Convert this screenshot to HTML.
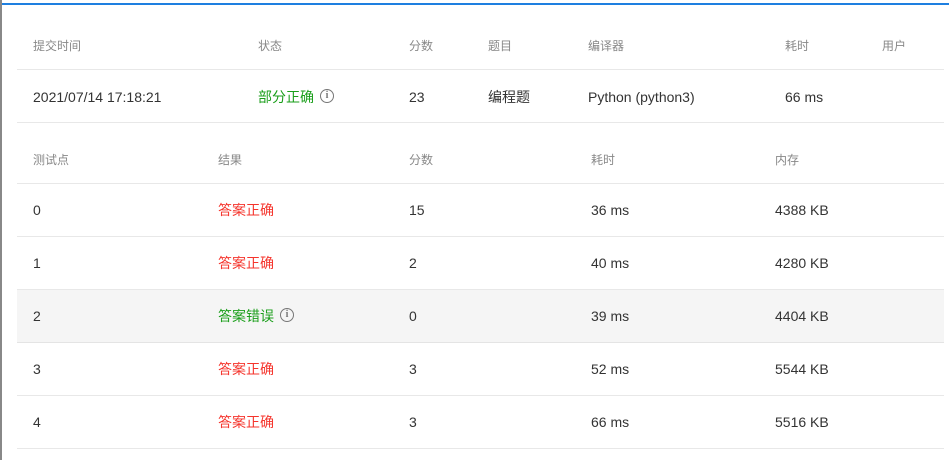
<!DOCTYPE html><html><head><style>
body{margin:0;width:949px;height:460px;overflow:hidden;background:#fff;font-family:"Liberation Sans","Noto Sans CJK SC",sans-serif;font-size:14px;color:#333;position:relative}
.top{position:absolute;left:0;top:3px;width:949px;height:2px;background:#1e7fe0}
.lb{position:absolute;left:0;top:0;width:2px;height:460px;background:#888}
.hl{position:absolute;left:17px;width:927px;height:1px;background:#e8e8e8}
.t{position:absolute;white-space:nowrap;line-height:16px}
.h{color:#888;font-size:12px}
.g{color:#1a9e1a}.r{color:#f5342c}
.i{display:inline-block;box-sizing:border-box;width:14px;height:14px;border:1.5px solid #777;border-radius:50%;color:#777;font-size:10px;line-height:11px;text-align:center;font-weight:bold;vertical-align:middle;position:relative;top:-2px;margin-left:6px;font-family:"Liberation Serif",serif}
.bg{position:absolute;left:17px;top:290px;width:927px;height:52px;background:#f5f5f5}
</style></head><body>
<div class="top"></div><div class="lb"></div>
<div class="bg"></div>
<div class="hl" style="top:69px"></div><div class="hl" style="top:122px"></div><div class="hl" style="top:183px"></div>
<div class="hl" style="top:236px"></div><div class="hl" style="top:289px"></div><div class="hl" style="top:342px;background:#e4e4e4"></div><div class="hl" style="top:395px"></div><div class="hl" style="top:448px"></div>
<div class="t h" style="left:33px;top:38px">提交时间</div><div class="t h" style="left:258px;top:38px">状态</div><div class="t h" style="left:409px;top:38px">分数</div><div class="t h" style="left:488px;top:38px">题目</div><div class="t h" style="left:588px;top:38px">编译器</div><div class="t h" style="left:785px;top:38px">耗时</div><div class="t h" style="left:882px;top:38px">用户</div>
<div class="t" style="left:33px;top:89px">2021/07/14 17:18:21</div><div class="t g" style="left:258px;top:89px">部分正确<span class="i">i</span></div><div class="t" style="left:409px;top:89px">23</div><div class="t" style="left:488px;top:89px">编程题</div><div class="t" style="left:588px;top:89px">Python (python3)</div><div class="t" style="left:785px;top:89px">66 ms</div>
<div class="t h" style="left:33px;top:152px">测试点</div><div class="t h" style="left:218px;top:152px">结果</div><div class="t h" style="left:409px;top:152px">分数</div><div class="t h" style="left:591px;top:152px">耗时</div><div class="t h" style="left:775px;top:152px">内存</div>
<div class="t" style="left:33px;top:202px">0</div><div class="t r" style="left:218px;top:202px">答案正确</div><div class="t" style="left:409px;top:202px">15</div><div class="t" style="left:591px;top:202px">36 ms</div><div class="t" style="left:775px;top:202px">4388 KB</div>
<div class="t" style="left:33px;top:255px">1</div><div class="t r" style="left:218px;top:255px">答案正确</div><div class="t" style="left:409px;top:255px">2</div><div class="t" style="left:591px;top:255px">40 ms</div><div class="t" style="left:775px;top:255px">4280 KB</div>
<div class="t" style="left:33px;top:308px">2</div><div class="t g" style="left:218px;top:308px">答案错误<span class="i">i</span></div><div class="t" style="left:409px;top:308px">0</div><div class="t" style="left:591px;top:308px">39 ms</div><div class="t" style="left:775px;top:308px">4404 KB</div>
<div class="t" style="left:33px;top:361px">3</div><div class="t r" style="left:218px;top:361px">答案正确</div><div class="t" style="left:409px;top:361px">3</div><div class="t" style="left:591px;top:361px">52 ms</div><div class="t" style="left:775px;top:361px">5544 KB</div>
<div class="t" style="left:33px;top:414px">4</div><div class="t r" style="left:218px;top:414px">答案正确</div><div class="t" style="left:409px;top:414px">3</div><div class="t" style="left:591px;top:414px">66 ms</div><div class="t" style="left:775px;top:414px">5516 KB</div>
</body></html>
